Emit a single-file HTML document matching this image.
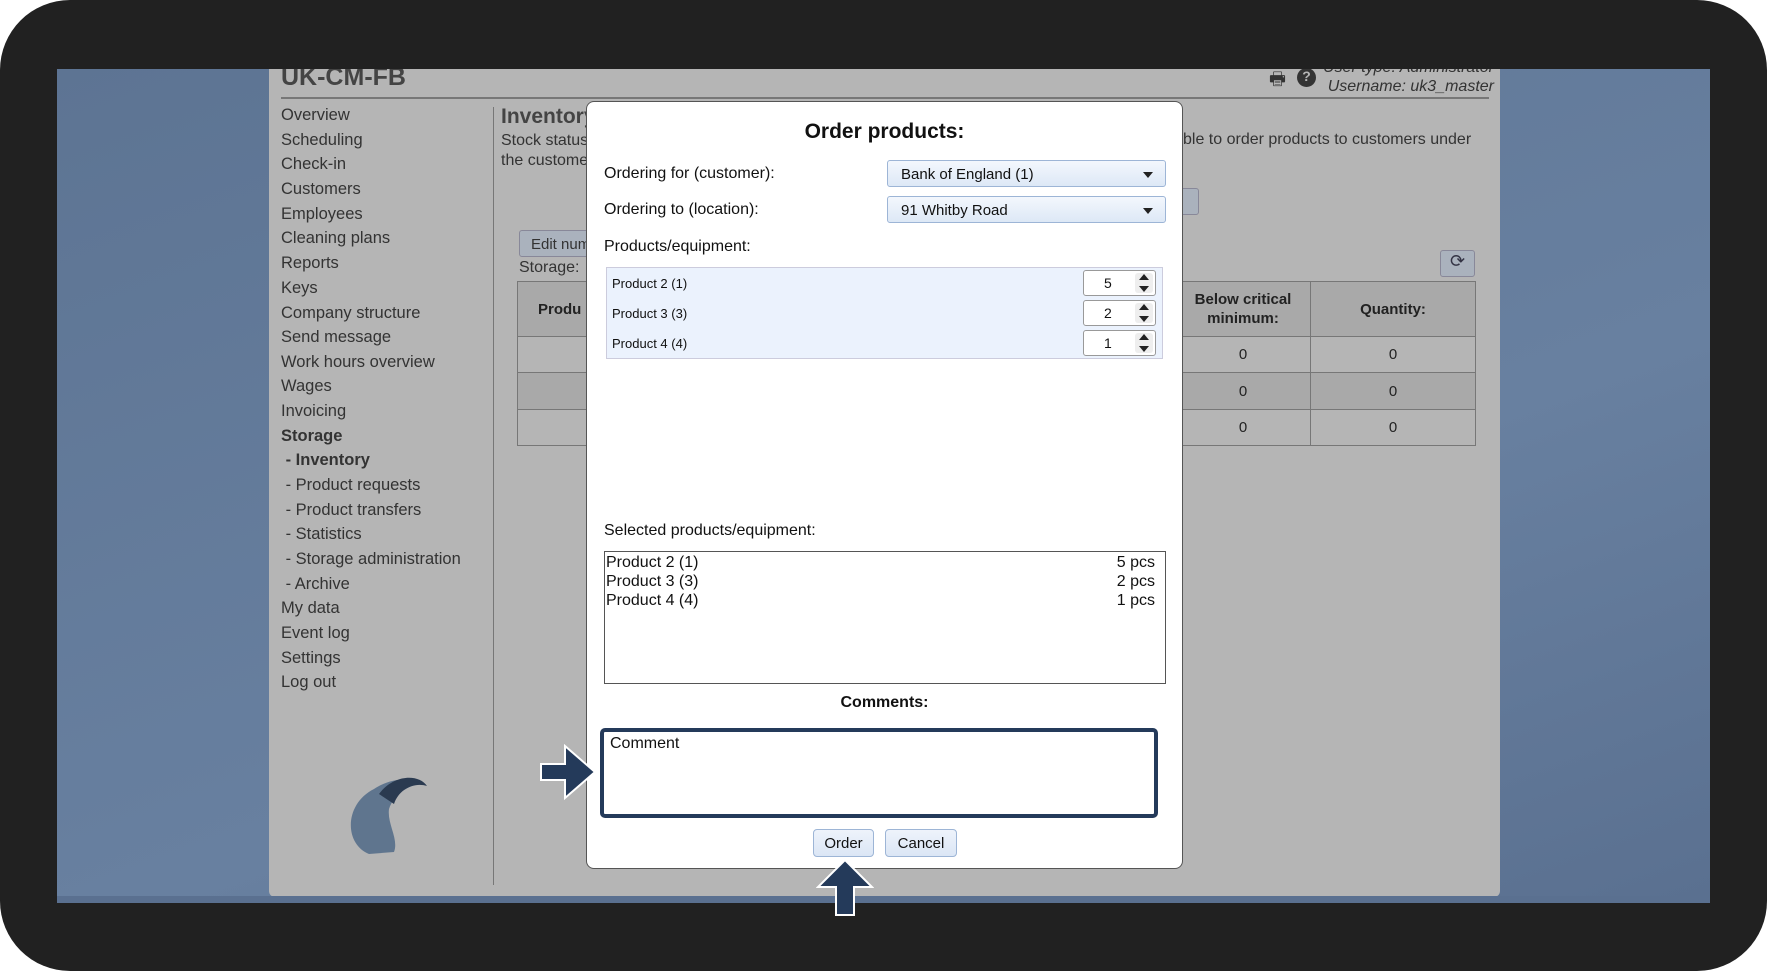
<!DOCTYPE html>
<html><head><style>
*{margin:0;padding:0;box-sizing:border-box}
body{width:1767px;height:971px;background:#fff;font-family:"Liberation Sans",sans-serif;position:relative;overflow:hidden}
.frame{position:absolute;left:0;top:0;width:1767px;height:971px;background:#212121;border-radius:70px}
.screen{position:absolute;left:57px;top:69px;width:1653px;height:834px;background:linear-gradient(160deg,#5d7493,#6880a0 60%,#5a7090);overflow:hidden}
.page{position:absolute;left:212px;top:0;width:1231px;height:828px;background:#b5b5b5;border-radius:0 0 6px 6px}
.a{position:absolute;white-space:nowrap}
.side div{position:absolute;left:12px;font-size:16.5px;color:#333}
.modal{position:absolute;left:586px;top:101px;width:597px;height:768px;background:#fff;border:1px solid #555;border-radius:8px}
.lab{position:absolute;left:17px;font-size:16px;color:#111}
.sel{position:absolute;left:300px;width:279px;height:27px;border:1px solid #9db5d6;border-radius:3px;background:linear-gradient(#f3f7fd,#dde8f6);font-size:15px;padding:5px 13px;color:#111}
.sel:after{content:"";position:absolute;right:12px;top:11px;border:5px solid transparent;border-top:6px solid #222}
.prow{position:absolute;left:0;width:100%;height:30px;font-size:13px;padding:8px 5px;color:#111}
.spin{position:absolute;right:6px;top:2px;width:73px;height:26px;border:1px solid #999;border-radius:3px;background:#fff;font-size:14px;padding:4px 0 0 20px}
.spin b{position:absolute;right:2px;top:2px;width:18px;height:20px;border-radius:3px;background:#eee}
.spin b:before{content:"";position:absolute;left:4px;top:1px;border:5px solid transparent;border-bottom:6px solid #222;border-top:0}
.spin b:after{content:"";position:absolute;left:4px;bottom:1px;border:5px solid transparent;border-top:6px solid #222;border-bottom:0}
.btn{position:absolute;height:28px;border:1px solid #9db5d6;border-radius:4px;background:linear-gradient(#eef3fb,#dbe6f5);font-size:15px;text-align:center;padding-top:5px;color:#111}
table{border-collapse:collapse;table-layout:fixed}
td{border:1px solid #777;text-align:center;font-size:15px;color:#222}
</style></head><body>
<div class="frame"></div>
<div class="screen">
<div class="page">
 <div class="a" style="left:12px;top:-6px;font-size:25px;font-weight:bold;color:#444">UK-CM-FB</div>
 <div class="a" style="left:12px;top:28px;width:1208px;height:2px;background:#777"></div>
 <div class="a" style="right:6px;top:-11px;font-size:16px;font-style:italic;color:#333;text-align:right;line-height:19px">User type: Administrator<br>Username: uk3_master</div>
 <div class="a" style="left:1000px;top:-2px;font-size:18px;color:#333">🖶</div>
 <div class="a" style="left:1028px;top:-1px;width:19px;height:19px;border-radius:50%;background:#333;color:#b5b5b5;font-size:14px;font-weight:bold;text-align:center">?</div>
 <div class="side">
  <div style="top:37px">Overview</div><div style="top:62px">Scheduling</div><div style="top:86px">Check-in</div><div style="top:111px">Customers</div><div style="top:136px">Employees</div><div style="top:160px">Cleaning plans</div><div style="top:185px">Reports</div><div style="top:210px">Keys</div><div style="top:235px">Company structure</div><div style="top:259px">Send message</div><div style="top:284px">Work hours overview</div><div style="top:308px">Wages</div><div style="top:333px">Invoicing</div><div style="top:358px;font-weight:bold">Storage</div><div style="top:382px;font-weight:bold">&nbsp;- Inventory</div><div style="top:407px">&nbsp;- Product requests</div><div style="top:432px">&nbsp;- Product transfers</div><div style="top:456px">&nbsp;- Statistics</div><div style="top:481px">&nbsp;- Storage administration</div><div style="top:506px">&nbsp;- Archive</div><div style="top:530px">My data</div><div style="top:555px">Event log</div><div style="top:580px">Settings</div><div style="top:604px">Log out</div>
 </div>
 <div class="a" style="left:224px;top:38px;width:1px;height:778px;background:#777"></div>
 <svg class="a" style="left:70px;top:695px" width="90" height="95" viewBox="0 0 90 95"><path d="M30 90 C5 80 5 40 35 25 C50 15 70 12 85 20 C70 20 55 30 50 45 C48 60 60 75 55 88 Z" fill="#4a6585" opacity=".8"/><path d="M40 30 C55 10 80 10 88 22 C75 18 60 25 55 40Z" fill="#2a3a50"/></svg>
 <div class="a" style="left:232px;top:36px;font-size:21px;font-weight:bold;color:#444">Inventory</div>
 <div class="a" style="left:232px;top:62px;font-size:16px;color:#333;line-height:20px">Stock status<br>the customer</div>
 <div class="a" style="left:914px;top:62px;font-size:16px;color:#333">ble to order products to customers under</div>
 <div class="a" style="left:250px;top:161px;width:80px;height:27px;border:1px solid #889;border-radius:3px;background:#aab2bd;font-size:15px;padding:5px 11px;color:#333">Edit num</div>
 <div class="a" style="left:250px;top:190px;font-size:16px;color:#333">Storage:</div>
 <div class="a" style="left:898px;top:119px;width:32px;height:27px;border:1px solid #889;border-radius:3px;background:#aab2bd;font-size:15px;padding:5px 3px;color:#333">n</div>
 <div class="a" style="left:1171px;top:181px;width:35px;height:27px;border:1px solid #889;border-radius:3px;background:#aab2bd;font-size:18px;text-align:center;color:#334">⟳</div>
 <table class="a" style="left:248px;top:212px;width:959px">
  <tr style="height:55px;background:#a9a9a9"><td style="font-weight:bold;text-align:left;padding-left:20px">Produ</td><td style="width:135px"></td><td style="width:135px;font-weight:bold;white-space:normal;line-height:19px">Below critical minimum:</td><td style="width:165px;font-weight:bold">Quantity:</td></tr>
  <tr style="height:36px"><td></td><td></td><td>0</td><td>0</td></tr>
  <tr style="height:37px;background:#a9a9a9"><td></td><td></td><td>0</td><td>0</td></tr>
  <tr style="height:36px"><td></td><td></td><td>0</td><td>0</td></tr>
 </table>
</div>
</div>
<div class="a" style="left:57px;top:896px;width:1653px;height:7px;background:#5a7090"></div>

<div class="modal">
 <div class="a" style="left:0;width:100%;top:18px;text-align:center;font-size:21px;font-weight:bold;color:#111">Order products:</div>
 <div class="lab" style="top:63px">Ordering for (customer):</div>
 <div class="sel" style="top:58px">Bank of England (1)</div>
 <div class="lab" style="top:99px">Ordering to (location):</div>
 <div class="sel" style="top:94px">91 Whitby Road</div>
 <div class="lab" style="top:136px">Products/equipment:</div>
 <div class="a" style="left:19px;top:165px;width:557px;height:92px;border:1px solid #ccd;background:#ebf2fd">
  <div class="prow" style="top:0">Product 2 (1)<div class="spin">5<b></b></div></div>
  <div class="prow" style="top:30px">Product 3 (3)<div class="spin">2<b></b></div></div>
  <div class="prow" style="top:60px">Product 4 (4)<div class="spin">1<b></b></div></div>
 </div>
 <div class="lab" style="top:420px">Selected products/equipment:</div>
 <div class="a" style="left:17px;top:449px;width:562px;height:133px;border:1px solid #555;font-size:16px;line-height:19px;color:#111;padding:1px">
  <div style="display:flex;justify-content:space-between;padding-right:9px"><span>Product 2 (1)</span><span>5 pcs</span></div>
  <div style="display:flex;justify-content:space-between;padding-right:9px"><span>Product 3 (3)</span><span>2 pcs</span></div>
  <div style="display:flex;justify-content:space-between;padding-right:9px"><span>Product 4 (4)</span><span>1 pcs</span></div>
 </div>
 <div class="a" style="left:0;width:100%;top:592px;text-align:center;font-size:16px;font-weight:bold;color:#111">Comments:</div>
 <div class="a" style="left:13px;top:626px;width:558px;height:90px;border:4px solid #243a5a;border-radius:5px;font-size:16px;padding:3px 6px;color:#111">Comment</div>
 <div class="btn" style="left:226px;top:727px;width:61px">Order</div>
 <div class="btn" style="left:298px;top:727px;width:72px">Cancel</div>
</div>
<svg class="a" style="left:538px;top:744px" width="62" height="56" viewBox="0 0 62 56"><path d="M3 20 H27 V2 L57 28 L27 54 V36 H3 Z" fill="#243a5a" stroke="#fff" stroke-width="2"/></svg>
<svg class="a" style="left:816px;top:858px" width="58" height="60" viewBox="0 0 58 60"><path d="M20 57 V29 H2 L29 2 L56 29 H38 V57 Z" fill="#243a5a" stroke="#fff" stroke-width="2"/></svg>
</body></html>
